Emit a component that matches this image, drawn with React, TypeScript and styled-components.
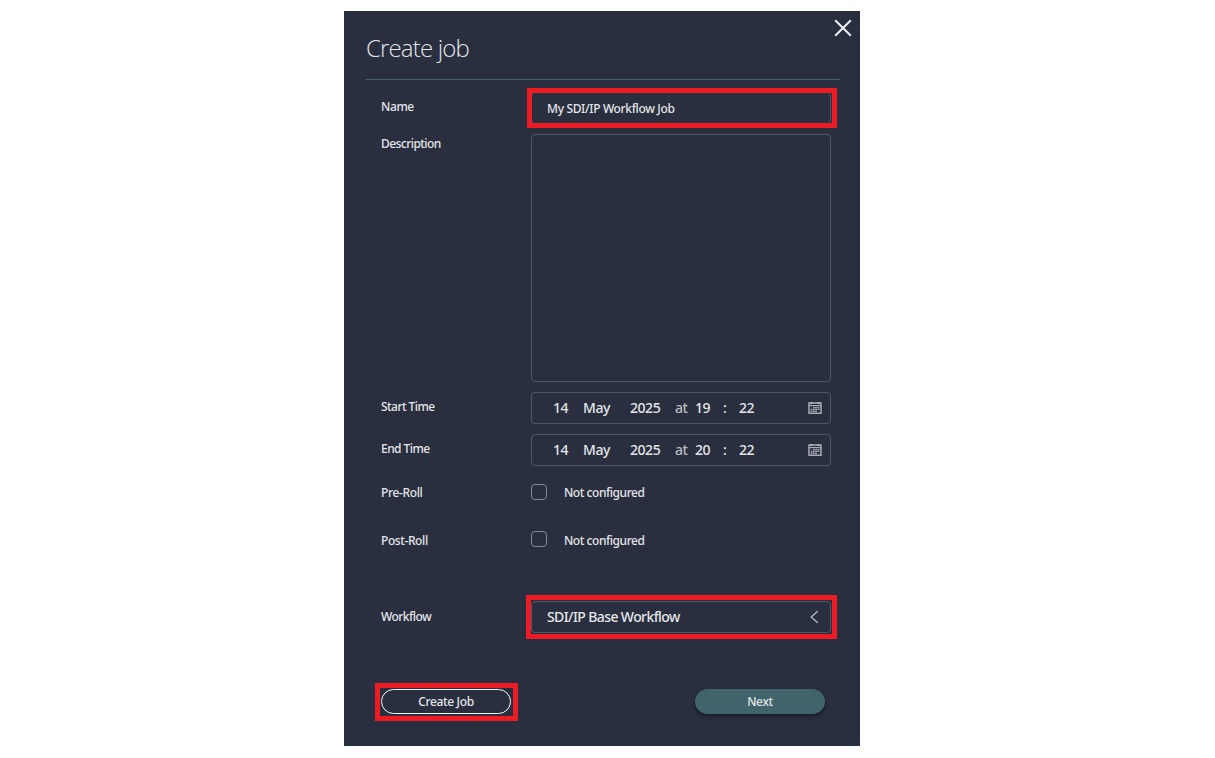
import React from "react";
import styled, { createGlobalStyle } from "styled-components";

const GlobalStyle = createGlobalStyle`
  * { box-sizing: border-box; }
  body {
    margin: 0;
    background: #ffffff;
    font-family: "Noto Sans", "Open Sans", sans-serif;
    font-weight: 500;
  }
`;

const Page = styled.main`
  height: 758px;
  padding: 11px 0 0 344px;
  overflow: hidden;
`;

const Dialog = styled.section`
  position: relative;
  display: flex;
  flex-direction: column;
  width: 516px;
  height: 735px;
  padding: 0 20px 0 22px;
  background: #292f3f;
  color: #e4e5e8;
`;

const Header = styled.header`
  height: 69px;
  padding-top: 20px;
  border-bottom: 1px solid #41636c;
`;

const Title = styled.h1`
  margin: 0;
  font-family: "Open Sans", "Noto Sans", sans-serif;
  font-size: 24px;
  font-weight: 340;
  line-height: 34px;
  letter-spacing: -0.85px;
  color: #e4e5e8;
`;

const CloseButton = styled.button`
  position: absolute;
  top: 8px;
  right: 8px;
  width: 18px;
  height: 18px;
  padding: 0;
  border: 0;
  background: none;
  svg { display: block; }
`;

const Form = styled.div`
  display: flex;
  flex-direction: column;
  padding: 12px 9px 0 15px;
`;

const Row = styled.div<{ $height?: number; $gap?: number }>`
  display: grid;
  grid-template-columns: 150px 300px;
  height: ${(p) => p.$height ?? 32}px;
  margin-bottom: ${(p) => p.$gap ?? 10}px;
`;

const Label = styled.label<{ $top?: number; $spacing?: number }>`
  padding-top: ${(p) => p.$top ?? 7}px;
  font-size: 12px;
  line-height: 16px;
  letter-spacing: ${(p) => p.$spacing ?? -0.55}px;
  white-space: nowrap;
`;

const Highlighted = styled.div<{ $inset: string }>`
  position: relative;
  display: flex;
  &::after {
    content: "";
    position: absolute;
    inset: ${(p) => p.$inset};
    border: 5px solid #ed1c24;
    pointer-events: none;
  }
`;

const Field = styled.div<{ $size?: number; $spacing?: number; $top?: number }>`
  display: flex;
  align-items: center;
  width: 300px;
  height: 100%;
  padding: ${(p) => p.$top ?? 0}px 11px 0 15px;
  border: 1px solid #50576a;
  border-radius: 4px;
  font-size: ${(p) => p.$size ?? 12}px;
  line-height: 18px;
  letter-spacing: ${(p) => p.$spacing ?? -0.35}px;
  white-space: nowrap;
  svg { margin-left: auto; flex: none; }
`;

const DateField = styled(Field)`
  display: grid;
  grid-template-columns: 30px 47px 45px 20px 28px 16px 60px 1fr;
  padding: 0 8px 0 21px;
`;

const Muted = styled.span`
  color: #b9bcc3;
`;

const Option = styled.div<{ $top: number }>`
  display: flex;
  align-items: flex-start;
  padding-top: ${(p) => p.$top}px;
`;

const Checkbox = styled.span`
  width: 16px;
  height: 16px;
  margin-right: 17px;
  border: 1px solid #848995;
  border-radius: 4px;
`;

const OptionText = styled.span<{ $shift: number }>`
  margin-top: ${(p) => p.$shift}px;
  font-size: 12px;
  line-height: 16px;
  letter-spacing: -0.45px;
`;

const Footer = styled.footer`
  display: flex;
  justify-content: space-between;
  padding: 56px 15px 0;
`;

const Button = styled.button<{ $primary?: boolean }>`
  width: 130px;
  height: 25px;
  padding: 1px 0 0;
  border: ${(p) => (p.$primary ? "0" : "1px solid #f4f5f6")};
  border-radius: 13px;
  background: ${(p) => (p.$primary ? "#41636c" : "transparent")};
  box-shadow: ${(p) => (p.$primary ? "0 2px 4px rgba(0, 0, 0, 0.45)" : "none")};
  color: #e4e5e8;
  font: 500 12px/16px "Noto Sans", "Open Sans", sans-serif;
  letter-spacing: -0.35px;
`;

const CalendarIcon = () => (
  <svg width="14" height="12" viewBox="0 0 14 12" fill="none">
    <path d="M1 1h12v10.300H1z" stroke="#a9adb6" strokeWidth="1.5" />
    <path d="M1 3.600h12" stroke="#a9adb6" strokeWidth="1.2" />
    <path d="M2.500 0h2v2h-2zM9.500 0h2v2h-2z" fill="#b9bcc3" />
    <path
      d="M5 5h1.700v1.300H5zM7.200 5h1.700v1.300H7.200zM9.400 5h2v1.300h-2zM2.700 6.800h1.800v1.300H2.700zM5 6.800h1.700v1.300H5zM7.200 6.800h1.700v1.300H7.200zM9.400 6.800h2v1.300h-2zM2.700 8.600h1.800v1.300H2.700zM5 8.600h1.700v1.300H5zM7.200 8.600h1.700v1.300H7.200z"
      fill="#a9adb6"
    />
  </svg>
);

const DateTime = ({ hour }: { hour: string }) => (
  <DateField $size={14} $spacing={-0.45}>
    <span>14</span>
    <span>May</span>
    <span>2025</span>
    <Muted>at</Muted>
    <span>{hour}</span>
    <span>:</span>
    <span>22</span>
    <CalendarIcon />
  </DateField>
);

export default function App() {
  return (
    <Page>
      <GlobalStyle />
      <Dialog role="dialog" aria-label="Create job">
        <Header>
          <Title>Create job</Title>
        </Header>
        <CloseButton aria-label="Close">
          <svg width="18" height="18" viewBox="0 0 18 18">
            <path d="M1.2 1.2l15.6 15.6M16.8 1.2L1.2 16.8" stroke="#f0f1f3" strokeWidth="2" />
          </svg>
        </CloseButton>
        <Form>
          <Row>
            <Label $spacing={-0.4}>Name</Label>
            <Highlighted $inset="-4px -6px -4px -4px">
              <Field $top={2}>My SDI/IP Workflow Job</Field>
            </Highlighted>
          </Row>
          <Row $height={248}>
            <Label $top={2}>Description</Label>
            <Field />
          </Row>
          <Row>
            <Label>Start Time</Label>
            <DateTime hour="19" />
          </Row>
          <Row>
            <Label>End Time</Label>
            <DateTime hour="20" />
          </Row>
          <Row $gap={16}>
            <Label $top={9} $spacing={-0.35}>Pre-Roll</Label>
            <Option $top={8}>
              <Checkbox />
              <OptionText $shift={1}>Not configured</OptionText>
            </Option>
          </Row>
          <Row $gap={45}>
            <Label $top={9} $spacing={-0.4}>Post-Roll</Label>
            <Option $top={7}>
              <Checkbox />
              <OptionText $shift={2}>Not configured</OptionText>
            </Option>
          </Row>
          <Row $gap={0}>
            <Label $top={8}>Workflow</Label>
            <Highlighted $inset="-6px -6px -6px -5px">
              <Field $size={14} $spacing={-0.6}>
                SDI/IP Base Workflow
                <svg width="10" height="14" viewBox="0 0 10 14" fill="none">
                  <path d="M8.700 1.200L2.200 7l6.500 5.800" stroke="#b4b7be" strokeWidth="1.4" />
                </svg>
              </Field>
            </Highlighted>
          </Row>
        </Form>
        <Footer>
          <Highlighted $inset="-6px -7px -7px -6px">
            <Button>Create Job</Button>
          </Highlighted>
          <Button $primary>Next</Button>
        </Footer>
      </Dialog>
    </Page>
  );
}
